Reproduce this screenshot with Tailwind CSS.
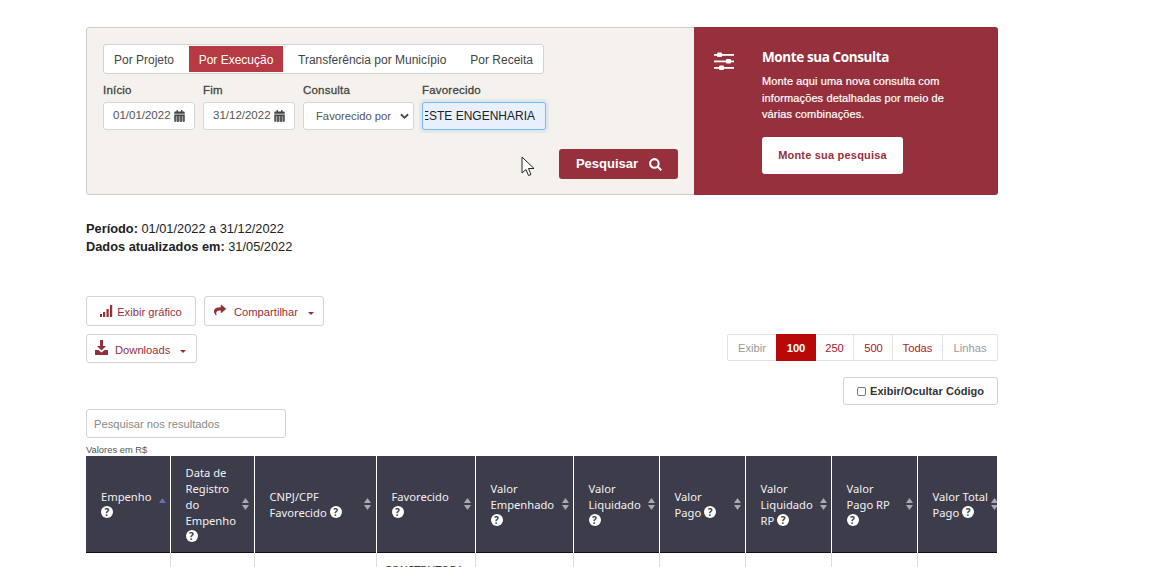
<!DOCTYPE html>
<html lang="pt-BR">
<head>
    <meta charset="UTF-8">
    <title>Consulta por Execução</title>
    <script src="https://cdn.jsdelivr.net/npm/@tailwindcss/browser@4"></script>
</head>
<body class="bg-white h-[567px] overflow-hidden font-['Liberation_Sans',Arial,sans-serif] text-[12px] text-[#333]">
    <main class="relative w-[912px] ml-[86px] pt-[27px]">

        <!-- painel de busca -->
        <section class="flex h-[168px] rounded-[3px] border border-[#cfcdca] bg-[#f5f2ed]">
            <div class="w-[607px] relative pl-[16px] pt-[16px]">
                <nav class="flex w-[441px] h-[30px] items-stretch bg-white border border-[#d3d3d3] rounded-[3px] text-[12px] text-[#444]">
                    <a class="pl-[10px] pr-[15px] pt-[6px]">Por Projeto</a>
                    <a class="w-[94px] my-[1px] text-center pt-[5px] bg-[#b53a43] text-white">Por Execução</a>
                    <a class="pl-[15px] pr-[24px] pt-[6px]">Transferência por Município</a>
                    <a class="pt-[6px]">Por Receita</a>
                </nav>
                <div class="flex mt-[8px] text-[#444]">
                    <label class="block w-[100px]">
                        <span class="block h-[20px] leading-[16px] [-webkit-text-stroke:0.3px] text-[11.5px] tracking-[0.2px]">Início</span>
                        <span class="flex items-center justify-between w-[92px] h-[28px] pl-[9px] pr-[9px] bg-white border border-[#d6d6d6] rounded-[3px] text-[11.5px] text-[#555]">01/01/2022
                            <svg class="w-[11px] h-[12px]" viewBox="0 0 448 512" fill="#444"><path d="M0 464a48 48 0 0 0 48 48h352a48 48 0 0 0 48-48V192H0zm64-192h64v48H64zm0 88h64v48H64zm0 88h64v48H64zm128-176h64v48h-64zm0 88h64v48h-64zm0 88h64v48h-64zm128-176h64v48h-64zm0 88h64v48h-64zm0 88h64v48h-64zM400 64h-48V16a16 16 0 0 0-16-16h-32a16 16 0 0 0-16 16v48H160V16a16 16 0 0 0-16-16h-32a16 16 0 0 0-16 16v48H48A48 48 0 0 0 0 112v48h448v-48a48 48 0 0 0-48-48z"/></svg>
                        </span>
                    </label>
                    <label class="block w-[100px]">
                        <span class="block h-[20px] leading-[16px] [-webkit-text-stroke:0.3px] text-[11.5px] tracking-[0.2px]">Fim</span>
                        <span class="flex items-center justify-between w-[92px] h-[28px] pl-[9px] pr-[9px] bg-white border border-[#d6d6d6] rounded-[3px] text-[11.5px] text-[#555]">31/12/2022
                            <svg class="w-[11px] h-[12px]" viewBox="0 0 448 512" fill="#444"><path d="M0 464a48 48 0 0 0 48 48h352a48 48 0 0 0 48-48V192H0zm64-192h64v48H64zm0 88h64v48H64zm0 88h64v48H64zm128-176h64v48h-64zm0 88h64v48h-64zm0 88h64v48h-64zm128-176h64v48h-64zm0 88h64v48h-64zm0 88h64v48h-64zM400 64h-48V16a16 16 0 0 0-16-16h-32a16 16 0 0 0-16 16v48H160V16a16 16 0 0 0-16-16h-32a16 16 0 0 0-16 16v48H48A48 48 0 0 0 0 112v48h448v-48a48 48 0 0 0-48-48z"/></svg>
                        </span>
                    </label>
                    <label class="block w-[119px]">
                        <span class="block h-[20px] leading-[16px] [-webkit-text-stroke:0.3px] text-[11.5px] tracking-[0.2px]">Consulta</span>
                        <span class="relative flex items-center w-[111px] h-[28px] pl-[12px] bg-white border border-[#d6d6d6] rounded-[3px] text-[11.25px] text-[#555] overflow-hidden">
                            <span class="whitespace-nowrap">Favorecido por</span>
                            <svg class="absolute right-[4px] top-[10px] w-[9px] h-[7px]" viewBox="0 0 10 7" fill="none" stroke="#444" stroke-width="2"><path d="M1 1l4 4 4-4"/></svg>
                        </span>
                    </label>
                    <label class="block w-[124px]">
                        <span class="block h-[20px] leading-[16px] [-webkit-text-stroke:0.3px] text-[11.5px] tracking-[0.2px]">Favorecido</span>
                        <span class="flex items-center justify-end w-[124px] h-[28px] pr-[10px] bg-[#e8f0fb] border border-[#74b8ee] rounded-[3px] text-[#222] shadow-[0_0_0_3px_#dfe8f1]">
                            <span class="flex justify-end w-[110px] overflow-hidden whitespace-nowrap">ESTE ENGENHARIA</span>
                        </span>
                    </label>
                </div>
                <button class="absolute left-[472px] top-[121px] flex items-center justify-center gap-[11px] w-[119px] h-[30px] pl-[1px] bg-[#96303c] rounded-[3px] text-white text-[13px] font-bold">
                    Pesquisar
                    <svg class="w-[13px] h-[13px]" viewBox="0 0 14 14" fill="none" stroke="#fff" stroke-width="2.200"><circle cx="5.800" cy="5.800" r="4.600"/><path d="M9.200 9.200l4 4"/></svg>
                </button>
            </div>
            <aside class="flex-1 flex bg-[#96303c] rounded-r-[3px] -my-px -mr-px text-white">
                <svg class="mt-[25px] ml-[20px] w-[20px] h-[18px]" viewBox="0 0 20 18" fill="#fff">
                    <rect x="0" y="2" width="20" height="1.800"/><rect x="0" y="8.500" width="20" height="1.800"/><rect x="0" y="15" width="20" height="1.800"/>
                    <rect x="3" y="0.500" width="5" height="4.500" rx="1"/><rect x="12" y="7" width="5" height="4.500" rx="1"/><rect x="5" y="13.500" width="5" height="4.500" rx="1"/>
                </svg>
                <div class="ml-[28px] pt-[21px]">
                    <h2 class="text-[13.5px] leading-[18px] font-bold tracking-[-0.4px] font-['Open_Sans',sans-serif]">Monte sua Consulta</h2>
                    <p class="mt-[7px] w-[195px] h-[49px] text-[11px] leading-[16.5px] tracking-[0.12px] [-webkit-text-stroke:0.2px]">Monte aqui uma nova consulta com informações detalhadas por meio de várias combinações.</p>
                    <a class="flex items-center justify-center mt-[15px] w-[141px] h-[37px] bg-white rounded-[3px] text-[#96303c] text-[11px] font-bold tracking-[0.2px]">Monte sua pesquisa</a>
                </div>
            </aside>
        </section>

        <!-- período -->
        <div class="mt-[25px] text-[12.8px] leading-[18px] text-[#222]">
            <p><b>Período:</b> 01/01/2022 a 31/12/2022</p>
            <p><b>Dados atualizados em:</b> 31/05/2022</p>
        </div>

        <!-- ações -->
        <div class="flex gap-[8px] mt-[40px] text-[11.2px] text-[#96303c]">
            <button class="flex items-center justify-center gap-[2px] w-[110px] h-[30px] pt-[2px] border border-[#d3d3d3] rounded-[3px]">
                <svg class="w-[15px] h-[14px] -mt-[3px]" viewBox="0 0 15 14" fill="#96303c"><rect x="0" y="10" width="2" height="3"/><rect x="3" y="8" width="2.200" height="5"/><rect x="6.500" y="5" width="2.200" height="8"/><rect x="10" y="1" width="2.200" height="12"/></svg>
                Exibir gráfico
            </button>
            <button class="flex items-center w-[120px] h-[30px] pl-[8px] pt-[2px] border border-[#d3d3d3] rounded-[3px]">
                <svg class="w-[14px] h-[12px] mr-[7px] -mt-[4px]" viewBox="0 0 512 512" fill="#96303c"><path d="M503.700 189.800 327.700 37.900C312.300 24.600 288 35.400 288 56v80.100C127.400 137.900 0 170.100 0 322.300c0 61.400 39.600 122.300 83.300 154.100 13.700 9.900 33.100-2.500 28.100-18.600-45.300-145 21.500-183.500 176.600-185.800V360c0 20.700 24.300 31.400 39.700 18.200l176-152c11.100-9.600 11.100-26.800 0-36.400z"/></svg>
                Compartilhar
                <span class="ml-[10px] mt-[2px] border-x-[3px] border-x-transparent border-t-[3px] border-t-[#96303c]"></span>
            </button>
        </div>
        <div class="flex justify-between items-start mt-[8px] text-[11.2px]">
            <button class="flex items-center w-[111px] h-[29px] pl-[8px] pt-[4px] border border-[#d3d3d3] rounded-[3px] text-[#96303c]">
                <svg class="w-[13px] h-[15px] mr-[7px] -mt-[7px]" viewBox="0 0 13 15" fill="#96303c"><path d="M5 0h3v6h3L6.500 10.500 2 6h3z"/><path d="M0 10h3.500l3 2.500 3-2.500H13v5H0z"/></svg>
                Downloads
                <span class="ml-[10px] mt-[1px] border-x-[3px] border-x-transparent border-t-[3px] border-t-[#96303c]"></span>
            </button>
            <div class="flex h-[27px] border border-[#e2e2e2] rounded-[2px] text-[#999] items-stretch leading-[27px] text-center">
                <span class="w-[48px]">Exibir</span>
                <span class="w-[40px] -my-px leading-[29px] bg-[#b80808] text-white font-bold">100</span>
                <span class="w-[38px] border-r border-[#e2e2e2] text-[#b0132a]">250</span>
                <span class="w-[39px] pl-[1px] border-r border-[#e2e2e2] text-[#b0132a]">500</span>
                <span class="w-[50px] border-r border-[#e2e2e2] text-[#b01c1c]">Todas</span>
                <span class="w-[54px]">Linhas</span>
            </div>
        </div>
        <div class="flex justify-end mt-[14px]">
            <label class="flex items-center gap-[4px] w-[155px] h-[28px] pl-[13px] border border-[#d3d3d3] rounded-[3px] text-[11px] font-bold tracking-[0.05px] text-[#333]">
                <span class="w-[9px] h-[9px] border border-[#777] rounded-[2px]"></span>
                Exibir/Ocultar Código
            </label>
        </div>

        <!-- filtro -->
        <div class="mt-[4px] w-[200px] h-[29px] pl-[7px] pt-[1px] flex items-center border border-[#d3d3d3] rounded-[3px] text-[11.2px] text-[#888]">Pesquisar nos resultados</div>
        <p class="mt-[6px] h-[12px] text-[9.4px] leading-[11px] text-[#555]">Valores em R$</p>

        <!-- tabela -->
        <div class="w-[911px] overflow-hidden">
            <table class="table-fixed w-[916px] border-collapse font-['Noto_Sans',sans-serif] text-[11.2px] leading-[16px] text-[#f2f2f4]">
                <colgroup>
                    <col class="w-[84px]"><col class="w-[84px]"><col class="w-[122px]"><col class="w-[99px]"><col class="w-[98px]"><col class="w-[86px]"><col class="w-[86px]"><col class="w-[86px]"><col class="w-[86px]"><col class="w-[85px]">
                </colgroup>
                <thead>
                    <tr class="h-[96px] bg-[#3d3c4a]">
                        <th class="relative font-normal text-left align-middle pl-[15px] pr-[22px] pt-[3px]">Empenho <span class="inline-flex items-center justify-center w-[12px] h-[12px] rounded-full bg-white text-[#3d3c4a] text-[10px] leading-none font-bold align-[1px]">?</span>
                            <svg class="absolute right-[4px] top-[42px] w-[7px] h-[12px]" viewBox="0 0 7 12"><path d="M3.500 0 7 5H0z" fill="#6a6fb0"/><path d="M3.500 12 7 7H0z" fill="#3d3c4a"/></svg></th>
                        <th class="relative font-normal text-left align-middle pl-[15px] pr-[22px] pt-[3px] border-l border-white">Data de Registro do Empenho <span class="inline-flex items-center justify-center w-[12px] h-[12px] rounded-full bg-white text-[#3d3c4a] text-[10px] leading-none font-bold align-[1px]">?</span>
                            <svg class="absolute right-[5px] top-[42px] w-[7px] h-[12px]" viewBox="0 0 7 12" fill="#a9a9b0"><path d="M3.500 0 7 5H0z"/><path d="M3.500 12 7 7H0z"/></svg></th>
                        <th class="relative font-normal text-left align-middle pl-[15px] pr-[22px] pt-[3px] border-l border-white">CNPJ/CPF Favorecido <span class="inline-flex items-center justify-center w-[12px] h-[12px] rounded-full bg-white text-[#3d3c4a] text-[10px] leading-none font-bold align-[1px]">?</span>
                            <svg class="absolute right-[5px] top-[42px] w-[7px] h-[12px]" viewBox="0 0 7 12" fill="#a9a9b0"><path d="M3.500 0 7 5H0z"/><path d="M3.500 12 7 7H0z"/></svg></th>
                        <th class="relative font-normal text-left align-middle pl-[15px] pr-[22px] pt-[3px] border-l border-white">Favorecido <span class="inline-flex items-center justify-center w-[12px] h-[12px] rounded-full bg-white text-[#3d3c4a] text-[10px] leading-none font-bold align-[1px]">?</span>
                            <svg class="absolute right-[4px] top-[42px] w-[7px] h-[12px]" viewBox="0 0 7 12" fill="#a9a9b0"><path d="M3.500 0 7 5H0z"/><path d="M3.500 12 7 7H0z"/></svg></th>
                        <th class="relative font-normal text-left align-middle pl-[15px] pr-[18px] pt-[3px] border-l border-white">Valor Empenhado <span class="inline-flex items-center justify-center w-[12px] h-[12px] rounded-full bg-white text-[#3d3c4a] text-[10px] leading-none font-bold align-[1px]">?</span>
                            <svg class="absolute right-[4px] top-[42px] w-[7px] h-[12px]" viewBox="0 0 7 12" fill="#a9a9b0"><path d="M3.500 0 7 5H0z"/><path d="M3.500 12 7 7H0z"/></svg></th>
                        <th class="relative font-normal text-left align-middle pl-[15px] pr-[16px] pt-[3px] border-l border-white">Valor Liquidado <span class="inline-flex items-center justify-center w-[12px] h-[12px] rounded-full bg-white text-[#3d3c4a] text-[10px] leading-none font-bold align-[1px]">?</span>
                            <svg class="absolute right-[4px] top-[42px] w-[7px] h-[12px]" viewBox="0 0 7 12" fill="#a9a9b0"><path d="M3.500 0 7 5H0z"/><path d="M3.500 12 7 7H0z"/></svg></th>
                        <th class="relative font-normal text-left align-middle pl-[15px] pr-[22px] pt-[3px] border-l border-white">Valor Pago <span class="inline-flex items-center justify-center w-[12px] h-[12px] rounded-full bg-white text-[#3d3c4a] text-[10px] leading-none font-bold align-[1px]">?</span>
                            <svg class="absolute right-[4px] top-[42px] w-[7px] h-[12px]" viewBox="0 0 7 12" fill="#a9a9b0"><path d="M3.500 0 7 5H0z"/><path d="M3.500 12 7 7H0z"/></svg></th>
                        <th class="relative font-normal text-left align-middle pl-[15px] pr-[16px] pt-[3px] border-l border-white">Valor Liquidado RP <span class="inline-flex items-center justify-center w-[12px] h-[12px] rounded-full bg-white text-[#3d3c4a] text-[10px] leading-none font-bold align-[1px]">?</span>
                            <svg class="absolute right-[4px] top-[42px] w-[7px] h-[12px]" viewBox="0 0 7 12" fill="#a9a9b0"><path d="M3.500 0 7 5H0z"/><path d="M3.500 12 7 7H0z"/></svg></th>
                        <th class="relative font-normal text-left align-middle pl-[15px] pr-[22px] pt-[3px] border-l border-white">Valor Pago RP <span class="inline-flex items-center justify-center w-[12px] h-[12px] rounded-full bg-white text-[#3d3c4a] text-[10px] leading-none font-bold align-[1px]">?</span>
                            <svg class="absolute right-[4px] top-[42px] w-[7px] h-[12px]" viewBox="0 0 7 12" fill="#a9a9b0"><path d="M3.500 0 7 5H0z"/><path d="M3.500 12 7 7H0z"/></svg></th>
                        <th class="relative font-normal text-left align-middle pl-[15px] pr-[14px] pt-[3px] border-l border-white">Valor Total Pago <span class="inline-flex items-center justify-center w-[12px] h-[12px] rounded-full bg-white text-[#3d3c4a] text-[10px] leading-none font-bold align-[1px]">?</span>
                            <svg class="absolute right-[4px] top-[42px] w-[7px] h-[12px]" viewBox="0 0 7 12" fill="#a9a9b0"><path d="M3.500 0 7 5H0z"/><path d="M3.500 12 7 7H0z"/></svg></th>
                    </tr>
                </thead>
                <tbody class="text-[#333] border-t border-[#111]">
                    <tr>
                        <td class="h-[40px]"></td>
                        <td class="border-l border-[#ddd]"></td>
                        <td class="border-l border-[#ddd]"></td>
                        <td class="border-l border-[#ddd] align-top pl-[8px] pt-[9px] text-[11px]">CONSTRUTORA</td>
                        <td class="border-l border-[#ddd]"></td>
                        <td class="border-l border-[#ddd]"></td>
                        <td class="border-l border-[#ddd]"></td>
                        <td class="border-l border-[#ddd]"></td>
                        <td class="border-l border-[#ddd]"></td>
                        <td class="border-l border-[#ddd]"></td>
                    </tr>
                </tbody>
            </table>
        </div>

        <!-- ponteiro do mouse -->
        <svg class="absolute left-[435px] top-[156px] w-[14px] h-[21px]" viewBox="0 0 14 21" fill="#fff" stroke="#222" stroke-width="1"><path d="M1 1v16l4-3.500 2.500 6 2.500-1-2.500-6H13z"/></svg>
    </main>
</body>
</html>
